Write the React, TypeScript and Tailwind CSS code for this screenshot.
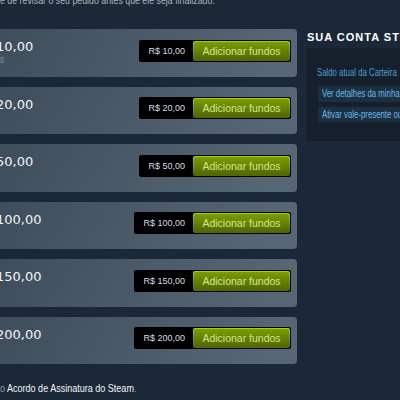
import React from "react";

const sans = "font-['Liberation_Sans',sans-serif]";

const cards = [
  { v: "10,00", p: "R$ 10,00", small: true },
  { v: "20,00", p: "R$ 20,00" },
  { v: "50,00", p: "R$ 50,00" },
  { v: "100,00", p: "R$ 100,00" },
  { v: "150,00", p: "R$ 150,00" },
  { v: "200,00", p: "R$ 200,00" },
];

function Card({ v, p, small }: { v: string; p: string; small?: boolean }) {
  return (
    <div className="h-[47.5px] rounded-[4px] bg-[linear-gradient(-60deg,rgba(226,244,255,0.3)_5%,rgba(84,107,115,0.2)_95%)] flex justify-between items-start pl-[16px] pr-[6px]">
      <div className="pt-[10px]">
        <div className="flex whitespace-nowrap text-[13px] leading-[16px] text-[#f2f4f6] font-['DejaVu_Sans',sans-serif]">
          <span className="w-[299px] shrink-0 text-right">Adicionar R$&nbsp;</span>
          <span>{v}</span>
        </div>
        {small && (
          <div className={`flex whitespace-nowrap text-[10px] leading-[12px] text-[#8f98a0] mt-[-1px] ${sans}`}>
            <span className="w-[303px] shrink-0 text-right">Mínimo para adicionar fundo</span>
            <span className="inline-block origin-left scale-x-[0.8]">s</span>
          </div>
        )}
      </div>
      <div className="mt-[10.5px] flex items-center bg-black rounded-[2px] p-[1px]">
        <span className={`px-[8px] text-[9px] leading-[20px] text-[#d6dde3] whitespace-nowrap ${sans}`}>
          {p}
        </span>
        <span className="rounded-[2px] p-[1px] bg-[linear-gradient(to_bottom,#a4d007_5%,#536904_95%)]">
          <span className={`block h-[18px] w-[95px] rounded-[2px] bg-[linear-gradient(to_bottom,#799905_5%,#536904_95%)] text-center text-[10.5px] leading-[18px] text-[#d2e885] whitespace-nowrap ${sans}`}>
            Adicionar fundos
          </span>
        </span>
      </div>
    </div>
  );
}

export default function App() {
  return (
    <div className="w-[400px] h-[400px] overflow-hidden bg-[#1b2838]">
      <div className="flex items-start">
        <div className="w-[616px] shrink-0 ml-[-319px] flex flex-col">
          <div className={`mt-[-6.5px] flex whitespace-nowrap text-[11px] leading-[13px] text-[#acb2b8] ${sans}`}>
            <span className="w-[319px] shrink-0 text-right">Certifique-s</span>
            <span className="inline-block origin-left scale-x-[0.8]">
              e de revisar o seu pedido antes que ele seja finalizado.
            </span>
          </div>
          <div className="mt-[22.8px] flex flex-col gap-[10px]">
            {cards.map((c) => (
              <Card key={c.v} {...c} />
            ))}
          </div>
          <div className={`mt-[17.4px] flex whitespace-nowrap text-[11px] leading-[13px] ${sans}`}>
            <span className="w-[319px] shrink-0 text-right text-[#8f98a0]">Esta transação está sujeita a</span>
            <span className="inline-block origin-left scale-x-[0.82]">
              <span className="text-[#8f98a0]">o </span>
              <span className="text-[#f3f5f7]">Acordo de Assinatura do Steam</span>
              <span className="text-[#8f98a0]">.</span>
            </span>
          </div>
        </div>
        <div className="w-[308px] shrink-0 ml-[10px] flex flex-col">
          <div className={`mt-[31px] text-[11px] leading-[13px] font-bold tracking-[1px] text-white whitespace-nowrap ${sans}`}>
            SUA CONTA STEAM
          </div>
          <div className={`mt-[4px] h-[93px] bg-[rgba(0,0,0,0.2)] pt-[19px] pl-[10px] ${sans}`}>
            <div className="text-[10px] leading-[12px] text-[#4f9dd3] whitespace-nowrap">
              <span className="inline-block origin-left scale-x-[0.78]">Saldo atual da Carteira</span>
            </div>
            <div className="mt-[7px] ml-[1px] flex flex-col gap-[5px]">
              <div className="h-[15.5px] bg-[rgba(103,193,245,0.1)] px-[4px] text-[10px] leading-[15.5px] text-[#66b8ec] whitespace-nowrap">
                <span className="inline-block origin-left scale-x-[0.78]">Ver detalhes da minha conta</span>
              </div>
              <div className="h-[15.5px] bg-[rgba(103,193,245,0.1)] px-[4px] text-[10px] leading-[15.5px] text-[#66b8ec] whitespace-nowrap">
                <span className="inline-block origin-left scale-x-[0.78]">Ativar vale-presente ou código da Carteira Steam</span>
              </div>
            </div>
          </div>
        </div>
      </div>
    </div>
  );
}
